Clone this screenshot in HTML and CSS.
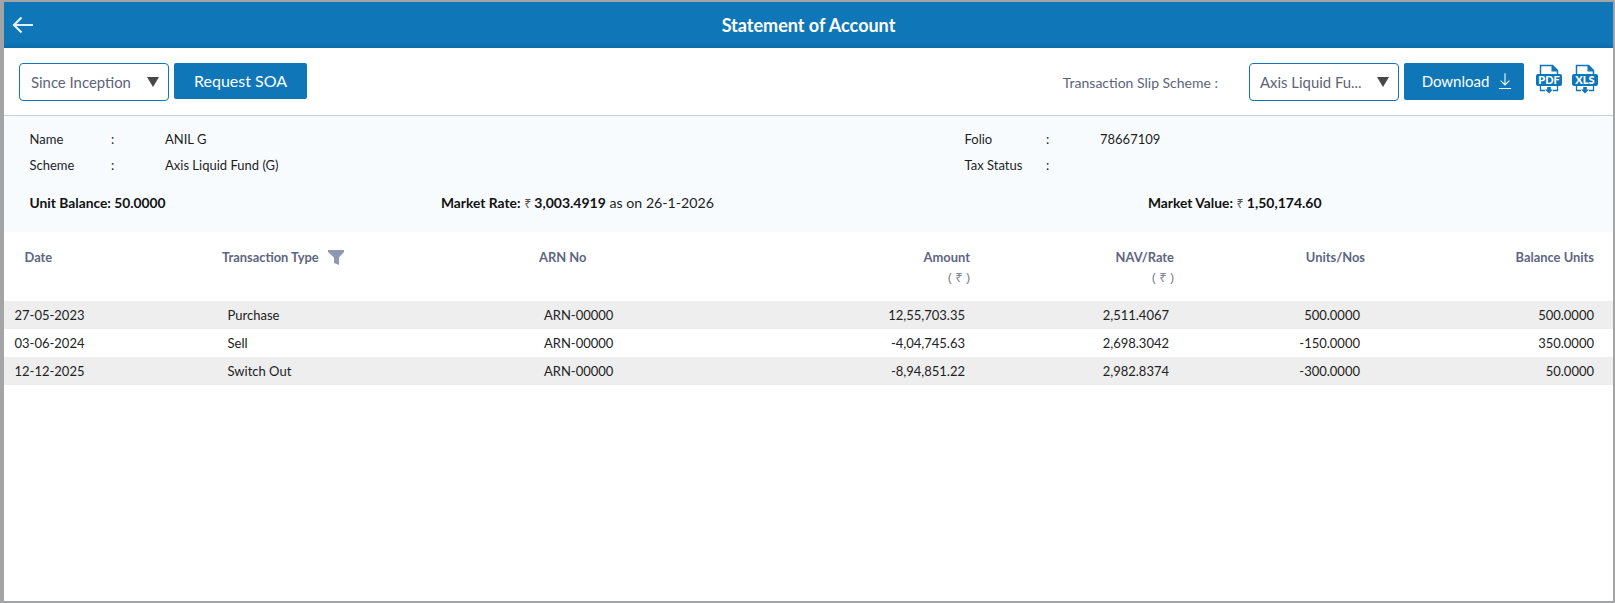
FILE: index.html
```html
<!DOCTYPE html>
<html lang="en">
<head>
<meta charset="utf-8">
<title>Statement of Account</title>
<link rel="stylesheet" href="styles.css">
</head>
<body>
<div class="app">
  <header class="topbar">
    <svg class="back" viewBox="0 0 22 18" width="22" height="18" aria-hidden="true"><path d="M21 9H2M9.500 1.500 2 9l7.500 7.500" fill="none" stroke="#e3eff8" stroke-width="2.200"/></svg>
    <h1 class="title">Statement of Account</h1>
  </header>

  <section class="toolbar">
    <div class="select"><span class="select-text">Since Inception</span><span class="caret"></span></div>
    <button class="btn btn-soa">Request SOA</button>
    <span class="slip-label">Transaction Slip Scheme :</span>
    <div class="select select-right"><span class="select-text">Axis Liquid Fu...</span><span class="caret"></span></div>
    <button class="btn btn-dl">Download
      <svg viewBox="0 0 16 20" width="14" height="18" aria-hidden="true"><path d="M8 1v13M3 9.500l5 5 5-5M1 18.500h14" fill="none" stroke="#fff" stroke-width="1.200"/></svg>
    </button>
    <svg class="file-icon" viewBox="0 0 26 30" width="26" height="30" aria-hidden="true">
      <path d="M4.500 11V1.500h12l5 5V11" fill="none" stroke="#0f77b7" stroke-width="1.500"/>
      <path d="M15.500 1.500h1.500l5 5v1h-6.500z" fill="#0f77b7"/>
      <rect x="0" y="10" width="26" height="12" rx="2" fill="#0f77b7"/>
      <text x="13" y="20" class="file-text">PDF</text>
      <path d="M4.500 22v4.500H9M21.500 22v4.500H17" fill="none" stroke="#0f77b7" stroke-width="1.300"/>
      <path d="M11.200 23h3.600v2.500h2.200L13 29.500l-4-4h2.200z" fill="#0f77b7"/>
    </svg>
    <svg class="file-icon" viewBox="0 0 26 30" width="26" height="30" aria-hidden="true">
      <path d="M4.500 11V1.500h12l5 5V11" fill="none" stroke="#0f77b7" stroke-width="1.500"/>
      <path d="M15.500 1.500h1.500l5 5v1h-6.500z" fill="#0f77b7"/>
      <rect x="0" y="10" width="26" height="12" rx="2" fill="#0f77b7"/>
      <text x="13" y="20" class="file-text">XLS</text>
      <path d="M4.500 22v4.500H9M21.500 22v4.500H17" fill="none" stroke="#0f77b7" stroke-width="1.300"/>
      <path d="M11.200 23h3.600v2.500h2.200L13 29.500l-4-4h2.200z" fill="#0f77b7"/>
    </svg>
  </section>

  <section class="summary">
    <div class="info-grid">
      <div class="info-row"><span>Name</span><span>:</span><span>ANIL G</span></div>
      <div class="info-row"><span>Folio</span><span>:</span><span>78667109</span></div>
      <div class="info-row"><span>Scheme</span><span>:</span><span>Axis Liquid Fund (G)</span></div>
      <div class="info-row"><span>Tax Status</span><span>:</span><span></span></div>
    </div>
    <div class="totals">
      <div class="total"><b>Unit Balance: 50.0000</b></div>
      <div class="total"><b>Market Rate:</b> <span class="rs">₹</span><b class="amt">3,003.4919</b> as on 26-1-2026</div>
      <div class="total"><b>Market Value:</b> <span class="rs">₹</span><b class="amt">1,50,174.60</b></div>
    </div>
  </section>

  <section class="table">
    <div class="grid head">
      <div class="c-date">Date</div>
      <div class="c-type">Transaction Type
        <svg class="funnel" viewBox="0 0 16 15" width="16" height="15" aria-hidden="true"><path d="M0 0h16v2l-5 5.500V15l-5-2V7.500L0 2z" fill="#8d99b3"/></svg>
      </div>
      <div class="c-arn">ARN No</div>
      <div class="c-num">Amount<small>( ₹ )</small></div>
      <div class="c-num">NAV/Rate<small>( ₹ )</small></div>
      <div class="c-num">Units/Nos</div>
      <div class="c-num c-last">Balance Units</div>
    </div>
    <div class="grid row shade">
      <div class="c-date">27-05-2023</div><div class="c-type">Purchase</div><div class="c-arn">ARN-00000</div>
      <div class="c-num">12,55,703.35</div><div class="c-num">2,511.4067</div><div class="c-num">500.0000</div><div class="c-num c-last">500.0000</div>
    </div>
    <div class="grid row">
      <div class="c-date">03-06-2024</div><div class="c-type">Sell</div><div class="c-arn">ARN-00000</div>
      <div class="c-num">-4,04,745.63</div><div class="c-num">2,698.3042</div><div class="c-num">-150.0000</div><div class="c-num c-last">350.0000</div>
    </div>
    <div class="grid row shade">
      <div class="c-date">12-12-2025</div><div class="c-type">Switch Out</div><div class="c-arn">ARN-00000</div>
      <div class="c-num">-8,94,851.22</div><div class="c-num">2,982.8374</div><div class="c-num">-300.0000</div><div class="c-num c-last">50.0000</div>
    </div>
  </section>
</div>
</body>
</html>
```
FILE: styles.css
```css
* { box-sizing: border-box; }
html, body { height: 100%; margin: 0; }
body {
  background: #a2a4a6;
  padding: 2px 2px 2px 4px;
  font-family: Lato, "Noto Sans", sans-serif;
  font-size: 13px;
  color: #1e1e1e;
}
.app { background: #fff; height: 100%; overflow: hidden; }

.topbar {
  height: 46px;
  background: linear-gradient(#0f77b7 0, #0f77b7 88%, #0d6ca8 100%);
  display: flex;
  align-items: center;
  padding-left: 8px;
}
.back { display: block; }
.title {
  flex: 1;
  margin: 0 30px 0 0;
  text-align: center;
  color: #fff;
  font-size: 18px;
  font-weight: 700;
  line-height: 46px;
}

.toolbar {
  height: 68px;
  border-bottom: 1px solid #c9d2e3;
  display: flex;
  align-items: flex-start;
  padding: 15px 15px 0;
}
.select {
  width: 150px;
  height: 38px;
  border: 1px solid #0f77b7;
  border-radius: 4px;
  display: flex;
  align-items: center;
  justify-content: space-between;
  padding: 0 9px 0 11px;
  font-size: 14.900px;
  color: #5d6478;
  background: #fff;
}
.caret {
  width: 0; height: 0;
  border-left: 6px solid transparent;
  border-right: 6px solid transparent;
  border-top: 10px solid #484848;
}
.btn {
  border: 0;
  border-radius: 2px;
  background: #0f77b7;
  color: #fff;
  font: 400 16px Lato, sans-serif;
  height: 36px;
  padding: 0 0 2px;
}
.btn-soa { width: 133px; margin-left: 5px; }
.slip-label { margin-left: auto; margin-right: 31px; margin-top: 11px; font-size: 14px; color: #5d6478; }
.select-right { margin-right: 5px; padding-left: 10px; }
.btn-dl {
  width: 120px;
  height: 37px;
  font-size: 15px;
  display: flex;
  align-items: center;
  justify-content: center;
  gap: 9px;
  padding-left: 6px;
  margin-right: 12px;
}
.file-icon { display: block; margin-top: 1px; margin-right: 10px; }
.file-icon:last-child { margin-right: 0; }
.file-text { font: 900 11px Lato, sans-serif; fill: #fff; text-anchor: middle; }

.summary { height: 116px; background: #f7fbfe; padding: 10px 0 0 25.500px; }
.info-grid {
  display: grid;
  grid-template-columns: 935px 1fr;
  grid-auto-rows: 26px;
}
.info-row {
  display: grid;
  grid-template-columns: 81.500px 54px 1fr;
  align-items: center;
}
.totals {
  display: grid;
  grid-template-columns: 411.500px 707px 1fr;
  margin-top: 15px;
  font-size: 14.200px;
  line-height: 20px;
}
.rs { color: #555; font-family: "Noto Sans", sans-serif; font-size: 12.500px; margin-right: 3px; }
.total b { font-weight: 700; font-size: 13.800px; color: #111; }
.total b.amt { font-size: 14px; }

.grid {
  display: grid;
  grid-template-columns: 208px 317px 256px 190px 204px 191px 1fr;
  padding-right: 14px;
}
.head {
  height: 69px;
  padding-top: 15px;
  font-weight: 700;
  font-size: 12.900px;
  color: #5d6680;
  line-height: 20px;
}
.head small { display: block; font-family: "Noto Sans", sans-serif; font-size: 13px; font-weight: 400; color: #7d8496; }
.head .c-date { padding-left: 20.500px; }
.head .c-type { padding-left: 10px; display: flex; align-items: flex-start; gap: 9px; }
.head .c-arn { padding-left: 10px; }
.head .c-num { padding-right: 5px; }
.funnel { margin-top: 3px; }

.row { height: 28px; align-items: center; font-size: 13px; color: #222; }
.row .c-date { padding-left: 10.500px; }
.row .c-type { padding-left: 15.500px; }
.row .c-arn { padding-left: 15px; }
.row .c-num { padding-right: 10px; }
.c-num { text-align: right; }
.c-num.c-last, .row .c-num.c-last { padding-right: 5px; }
.shade { background: #eeeeee; }
```
